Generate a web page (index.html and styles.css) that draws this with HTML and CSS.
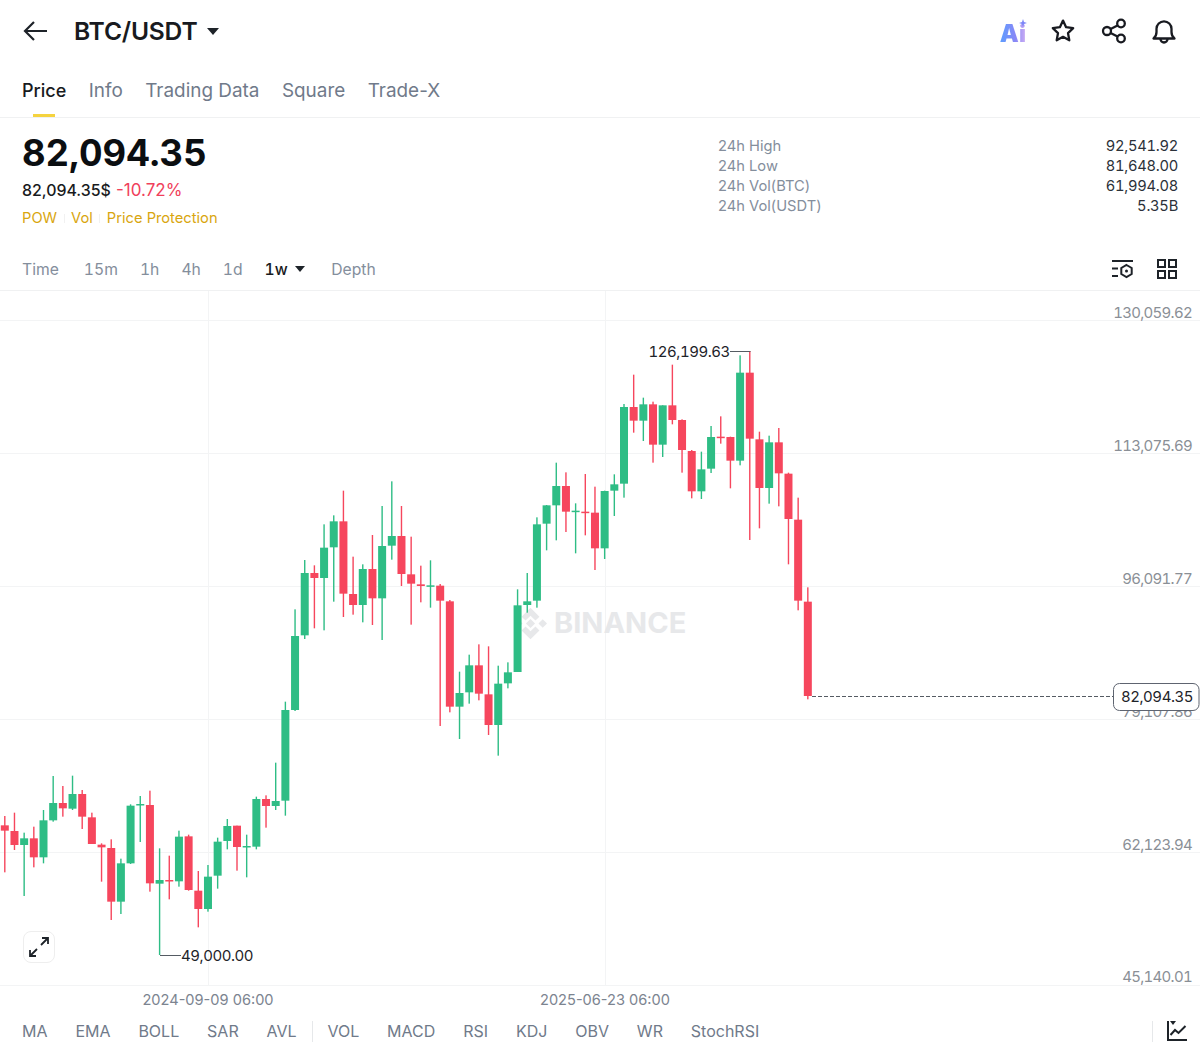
FILE: index.html
```html
<!DOCTYPE html>
<html lang="en">
<head>
    <meta charset="UTF-8">
    <meta name="viewport" content="width=device-width, initial-scale=1.0">
    <title>BTC/USDT</title>
    <link rel="stylesheet" href="styles.css">
</head>
<body>

    <!-- Top bar -->
    <div class="top-bar">
        <svg class="back-icon" width="26" height="22" viewBox="0 0 26 22"><path d="M24 11H2M11 2l-9 9 9 9"/></svg>
        <span class="pair-name">BTC/USDT</span>
        <span class="caret caret-big"></span>
        <div class="top-actions">
            <span class="ai-badge">Ai<svg class="ai-spark" width="8" height="8" viewBox="0 0 8 8"><path d="M4 0l1 3 3 1-3 1-1 3-1-3-3-1 3-1z"/></svg></span>
            <svg class="line-icon star-icon" width="26" height="26" viewBox="0 0 26 26"><path d="M13 2.6l3.1 6.6 7.1.9-5.2 5 1.3 7.2-6.3-3.5-6.3 3.5 1.3-7.2-5.2-5 7.1-.9z"/></svg>
            <svg class="line-icon" width="26" height="26" viewBox="0 0 26 26"><circle cx="6" cy="13" r="4"/><circle cx="20" cy="5.5" r="3.8"/><circle cx="20" cy="20.5" r="3.8"/><path d="M9.6 11.1l6.9-3.7M9.6 14.9l6.9 3.7"/></svg>
            <svg class="line-icon" width="26" height="26" viewBox="0 0 26 26"><path d="M2.5 20.5c2.2-1.6 3-3.6 3-6.5v-3.2a7.5 7.5 0 0 1 15 0V14c0 2.9.8 4.9 3 6.500z"/><path d="M9.500 21a3.500 3.500 0 0 0 7 0"/></svg>
        </div>
    </div>

    <!-- Tabs -->
    <div class="tabs">
        <span class="tab tab-active">Price</span>
        <span class="tab">Info</span>
        <span class="tab">Trading Data</span>
        <span class="tab">Square</span>
        <span class="tab">Trade-X</span>
    </div>

    <!-- Price summary -->
    <div class="summary">
        <div class="summary-left">
            <div class="last-price">82,094.35</div>
            <div class="sub-price">82,094.35$ <span class="change">-10.72%</span></div>
            <div class="tags">
                <span>POW</span><i class="tag-sep"></i><span>Vol</span><i class="tag-sep"></i><span>Price Protection</span>
            </div>
        </div>
        <div class="stats">
            <span class="stat-label">24h High</span><span class="stat-value">92,541.92</span>
            <span class="stat-label">24h Low</span><span class="stat-value">81,648.00</span>
            <span class="stat-label">24h Vol(BTC)</span><span class="stat-value">61,994.08</span>
            <span class="stat-label">24h Vol(USDT)</span><span class="stat-value">5.35B</span>
        </div>
    </div>

    <!-- Time frames -->
    <div class="frames">
        <span class="frame-time">Time</span>
        <span>15m</span>
        <span>1h</span>
        <span>4h</span>
        <span>1d</span>
        <span class="frame-active">1w<i class="caret"></i></span>
        <span>Depth</span>
        <div class="frame-tools">
            <svg class="tool-icon" width="24" height="22" viewBox="0 0 24 22"><path d="M1 3h21M1 10.500h6M1 18h6"/><path d="M15.500 7l5.200 3v6l-5.200 3-5.200-3v-6z"/><circle class="dot" cx="15.500" cy="13" r="1.500"/></svg>
            <svg class="tool-icon" width="22" height="22" viewBox="0 0 22 22"><rect x="2" y="2" width="7" height="7"/><rect x="13" y="2" width="7" height="7"/><rect x="2" y="13" width="7" height="7"/><rect x="13" y="13" width="7" height="7"/></svg>
        </div>
    </div>

    <!-- Chart, drawn by chart.js in page coordinates -->
    <div class="chart">
        <svg id="chartSvg" width="1200" height="721" viewBox="0 291 1200 721"></svg>
        <div class="expand-btn">
            <svg width="22" height="22" viewBox="0 0 22 22"><path d="M13 9l7-7M14 2h6v6M9 13l-7 7M2 14v6h6"/></svg>
        </div>
    </div>

    <!-- Indicators -->
    <div class="indicators">
        <span>MA</span>
        <span>EMA</span>
        <span>BOLL</span>
        <span>SAR</span>
        <span>AVL</span>
        <i class="ind-sep"></i>
        <span>VOL</span>
        <span>MACD</span>
        <span>RSI</span>
        <span>KDJ</span>
        <span>OBV</span>
        <span>WR</span>
        <span>StochRSI</span>
        <div class="ind-right">
            <i class="ind-sep"></i>
            <svg class="tool-icon" width="22" height="22" viewBox="0 0 22 22"><path d="M2 1v19h19M4.500 15l4.500-5 3.500 3 7-7"/><path class="dot" d="M4 1h6l-3 4z"/></svg>
        </div>
    </div>

    <script src="chart.js"></script>
</body>
</html>
```

FILE: styles.css
```css
/* Basic Reset */
* {
    margin: 0;
    padding: 0;
    box-sizing: border-box;
}

body {
    font-family: Inter, "Liberation Sans", sans-serif;
    background-color: #ffffff;
    color: #1e2329;
    width: 1200px;
    height: 1052px;
    overflow: hidden;
}

i {
    font-style: normal;
}

.top-bar {
    display: flex;
    align-items: center;
    height: 62px;
    padding: 0 23px 0 23px;
}

.back-icon {
    fill: none;
    stroke: #1e2329;
    stroke-width: 2.2;
}

.pair-name {
    margin-left: 25px;
    font-size: 24.6px;
    font-weight: 600;
    letter-spacing: -0.2px;
    color: #181a20;
}

.caret {
    display: inline-block;
    width: 0;
    height: 0;
    border-left: 5.5px solid transparent;
    border-right: 5.5px solid transparent;
    border-top: 6px solid #1e2329;
}

.caret-big {
    margin-left: 10px;
    border-left-width: 6.500px;
    border-right-width: 6.500px;
    border-top-width: 7px;
}

.top-actions {
    display: flex;
    align-items: center;
    gap: 24px;
    margin-left: auto;
}

.star-icon {
    margin-right: 1px;
}

.ai-badge {
    position: relative;
    font-size: 24px;
    font-weight: 900;
    line-height: 26px;
    margin-top: 5px;
    background: linear-gradient(90deg, #5c9dff, #8a88f6 60%, #cdaef3);
    -webkit-background-clip: text;
    background-clip: text;
    color: transparent;
}

.ai-spark {
    position: absolute;
    right: -1px;
    top: -2px;
    fill: #7d86f8;
}

.line-icon {
    fill: none;
    stroke: #181a20;
    stroke-width: 2.3;
    stroke-linejoin: round;
}

.tabs {
    display: flex;
    align-items: flex-start;
    gap: 22.5px;
    height: 56px;
    padding: 17px 0 0 22px;
    border-bottom: 1px solid #f0f1f2;
}

.tab {
    position: relative;
    font-size: 18.9px;
    line-height: 24px;
    color: #707a8a;
}

.tab-active {
    color: #181a20;
    font-size: 18px;
    font-weight: 500;
}

.tab-active::after {
    content: "";
    position: absolute;
    left: 11px;
    bottom: -14px;
    width: 22px;
    height: 3px;
    background-color: #f5d33f;
}

.summary {
    display: flex;
    justify-content: space-between;
    height: 131px;
    padding: 0 22px;
}

.last-price {
    margin-top: 11px;
    font-size: 36.5px;
    line-height: 48px;
    font-weight: 700;
    font-variant-numeric: tabular-nums;
    color: #0b0e11;
}

.sub-price {
    margin-top: 2px;
    font-size: 15.9px;
    line-height: 22px;
    font-weight: 500;
    color: #181a20;
}

.change {
    margin-left: 1px;
    font-size: 17px;
    color: #f0405b;
    font-weight: 400;
}

.tags {
    display: flex;
    align-items: center;
    margin-top: 6px;
    font-size: 14.7px;
    line-height: 20px;
    color: #d9a60f;
}

.tag-sep {
    width: 1px;
    height: 9px;
    margin: 0 6.5px;
    background-color: #f1f1f1;
}

.stats {
    display: grid;
    grid-template-columns: 1fr auto;
    grid-auto-rows: 20px;
    width: 460px;
    margin-top: 18px;
    align-self: flex-start;
    font-size: 14.7px;
    line-height: 20px;
}

.stat-label {
    color: #848e9c;
}

.stat-value {
    text-align: right;
    font-variant-numeric: tabular-nums;
    letter-spacing: -0.25px;
    color: #2b3139;
}

.frames {
    display: flex;
    align-items: center;
    gap: 22px;
    height: 42px;
    padding: 0 22px 1px;
    border-bottom: 1px solid #f0f1f2;
    font-size: 15.7px;
    font-variant-numeric: tabular-nums;
    color: #848e9c;
}

.frame-time {
    margin-right: 3px;
}

.frame-active {
    display: flex;
    align-items: center;
    gap: 7px;
    margin-right: 4.5px;
    color: #181a20;
    font-weight: 500;
}

.frame-tools {
    display: flex;
    align-items: center;
    gap: 21px;
    margin-left: auto;
}

.tool-icon {
    fill: none;
    stroke: #1e2329;
    stroke-width: 2;
}

.tool-icon .dot {
    fill: #1e2329;
    stroke: none;
}

.chart {
    position: relative;
    height: 720px;
}

.chart svg {
    display: block;
}

.expand-btn {
    position: absolute;
    left: 23px;
    top: 640px;
    width: 32px;
    height: 32px;
    display: flex;
    align-items: center;
    justify-content: center;
    background-color: #ffffff;
    border: 1px solid #eeeeee;
    border-radius: 8px;
}

.expand-btn svg {
    fill: none;
    stroke: #1e2329;
    stroke-width: 1.800;
}

.grid-line {
    stroke: #f3f4f5;
    stroke-width: 1;
}

.bull {
    fill: #2ebd85;
}

.bear {
    fill: #f6465d;
}

.axis-label {
    font-size: 15px;
    font-variant-numeric: tabular-nums;
    letter-spacing: -0.7px;
    fill: #8a8f96;
    text-anchor: end;
}

.date-label {
    font-size: 14.6px;
    fill: #7c8490;
    text-anchor: middle;
}

.mark-label {
    font-size: 15px;
    font-variant-numeric: tabular-nums;
    letter-spacing: -0.45px;
    fill: #1e2329;
}

.mark-line {
    stroke: #555b63;
    stroke-width: 1;
    fill: none;
}

.last-line {
    stroke: #555b63;
    stroke-width: 1;
    stroke-dasharray: 4 2;
}

.last-tag {
    fill: #ffffff;
    stroke: #5e6470;
    stroke-width: 1;
}

.last-text {
    font-size: 15px;
    font-variant-numeric: tabular-nums;
    letter-spacing: -0.45px;
    fill: #1e2329;
    text-anchor: middle;
}

.watermark {
    font-size: 29px;
    font-weight: 700;
    fill: #e7e8ea;
}

.watermark-logo {
    fill: #e7e8ea;
}

.indicators {
    display: flex;
    align-items: center;
    gap: 27.9px;
    height: 40px;
    padding: 0 12px 0 22px;
    font-size: 16px;
    color: #707a8a;
}

.ind-sep {
    display: block;
    width: 1px;
    height: 21px;
    margin: 0 -13px 0 -13px;
    background-color: #e6e8ea;
}

.ind-right {
    display: flex;
    align-items: center;
    gap: 26px;
    margin-left: auto;
}
```

FILE: chart.js
```js
// Candles as [type, high, bodyTop, bodyBottom, low], y values read off 3x crops
const segments = [
    { baseY: 760, candles: [
        ['r',168,196,212,337], ['r',158,213,255,270], ['g',218,235,255,408], ['r',200,235,292,322],
        ['g',150,181,292,310], ['g',48,129,181,185], ['r',78,129,145,170], ['g',47,102,146,150],
        ['r',90,102,170,207], ['r',158,172,252,252], ['r',250,254,262,365], ['r',238,264,425,480],
        ['g',296,310,425,462], ['g',133,137,310,312], ['g',108,132,135,246], ['r',92,135,370,395],
        ['g',265,360,371,585], ['r',287,360,363,418], ['g',212,230,364,380], ['r',224,229,390,392],
        ['r',333,392,447,502], ['g',315,350,447,455], ['g',233,245,347,386], ['g',177,198,243,268],
        ['r',197,197,261,332], ['g',224,258,261,352], ['g',110,117,260,268], ['r',106,117,138,203],
        ['g',8,123,138,150]
    ]},
    { baseY: 480, candles: [
        ['g',665,690,962,1007], ['g',388,468,690,693], ['g',240,279,466,477], ['r',256,279,294,445],
        ['g',133,203,294,451], ['g',106,124,202,365], ['r',32,124,341,411], ['r',230,342,375,404],
        ['g',253,267,375,427], ['r',165,267,355,435], ['g',78,198,355,480], ['g',4,168,197,239],
        ['r',78,168,282,318], ['r',170,283,311,434], ['r',257,313,318,367], ['g',241,316,319,383],
        ['r',312,317,362,738], ['r',360,364,680,697], ['g',575,639,680,777], ['g',524,556,637,671],
        ['r',493,556,641,661], ['r',499,643,735,765], ['g',557,611,735,827], ['g',547,577,610,625],
        ['g',328,376,576,576], ['g',279,364,375,398], ['g',112,133,362,383], ['g',75,76,131,211]
    ]},
    { baseY: 340, candles: [
        ['g',368,438,496,601], ['r',397,438,515,576], ['g',490,512,515,640], ['r',402,515,519,586],
        ['r',440,518,625,690], ['g',452,453,625,657], ['g',403,433,452,528], ['g',192,201,431,473],
        ['r',104,201,242,278], ['g',173,193,242,303], ['r',185,193,314,368], ['g',196,196,314,351],
        ['r',74,196,240,253], ['r',238,240,330,398], ['r',330,333,454,475], ['g',335,388,454,477],
        ['g',258,291,386,399], ['r',229,290,294,311], ['r',290,291,362,445], ['g',46,98,362,376],
        ['r',33,98,296,600], ['r',275,298,444,565], ['g',287,307,444,491], ['r',264,307,400,499],
        ['r',398,401,537,673], ['r',473,539,782,811], ['r',742,785,1068,1078]
    ]}
];

const svg = document.getElementById('chartSvg');
const SVG_NS = 'http://www.w3.org/2000/svg';
const FIRST_X = 4.8;
const STEP = 9.675;
const BODY_W = 8;
const WICK_W = 1.4;

function add(tag, attrs, text) {
    const el = document.createElementNS(SVG_NS, tag);
    Object.keys(attrs).forEach(key => el.setAttribute(key, attrs[key]));
    if (text) el.textContent = text;
    svg.appendChild(el);
    return el;
}

// Grid
[321, 454, 587, 720, 853, 986].forEach(y => {
    add('line', { class: 'grid-line', x1: 0, x2: 1200, y1: y - 0.5, y2: y - 0.5 });
});
[208.5, 605.5].forEach(x => {
    add('line', { class: 'grid-line', x1: x, x2: x, y1: 291, y2: 985 });
});

// Watermark
add('path', {
    class: 'watermark-logo',
    transform: 'translate(508.5 601.5) scale(1.375)',
    d: 'M16 4.500L22.500 11 19.600 13.900 16 10.300 12.400 13.900 9.500 11ZM16 27.500L9.500 21 12.400 18.100 16 21.700 19.600 18.100 22.500 21ZM16 12.700L19.300 16 16 19.300 12.700 16ZM7.100 12.900L10.200 16 7.100 19.100 4 16ZM24.900 12.900L28 16 24.900 19.100 21.800 16Z'
});
add('text', { class: 'watermark', x: 554, y: 633 }, 'BINANCE');

// Candles
let index = 0;
segments.forEach(seg => {
    seg.candles.forEach(([type, high, top, bottom, low]) => {
        const cls = type === 'g' ? 'bull' : 'bear';
        const x = FIRST_X + index * STEP;
        const y = v => seg.baseY + v / 3;
        add('rect', { class: cls, x: x - WICK_W / 2, y: y(high), width: WICK_W, height: (low - high) / 3 });
        add('rect', { class: cls, x: x - BODY_W / 2, y: y(top), width: BODY_W, height: Math.max((bottom - top) / 3, 1.5) });
        index++;
    });
});

// Price axis
[['130,059.62', 318], ['113,075.69', 451], ['96,091.77', 584], ['79,107.86', 717], ['62,123.94', 850], ['45,140.01', 982]].forEach(([label, y]) => {
    add('text', { class: 'axis-label', x: 1192, y }, label);
});

// Date axis
add('text', { class: 'date-label', x: 208, y: 1004.5 }, '2024-09-09 06:00');
add('text', { class: 'date-label', x: 605, y: 1004.5 }, '2025-06-23 06:00');

// High and low marks
add('path', { class: 'mark-line', d: 'M730 351.500H750.500' });
add('text', { class: 'mark-label', x: 648.500, y: 357 }, '126,199.63');
add('path', { class: 'mark-line', d: 'M160 955.500H181' });
add('text', { class: 'mark-label', x: 181, y: 961 }, '49,000.00');

// Last price
add('line', { class: 'last-line', x1: 812, x2: 1113, y1: 696.500, y2: 696.500 });
add('rect', { class: 'last-tag', x: 1113.500, y: 683.500, width: 85.500, height: 27, rx: 6 });
add('text', { class: 'last-text', x: 1157, y: 702 }, '82,094.35');
```
